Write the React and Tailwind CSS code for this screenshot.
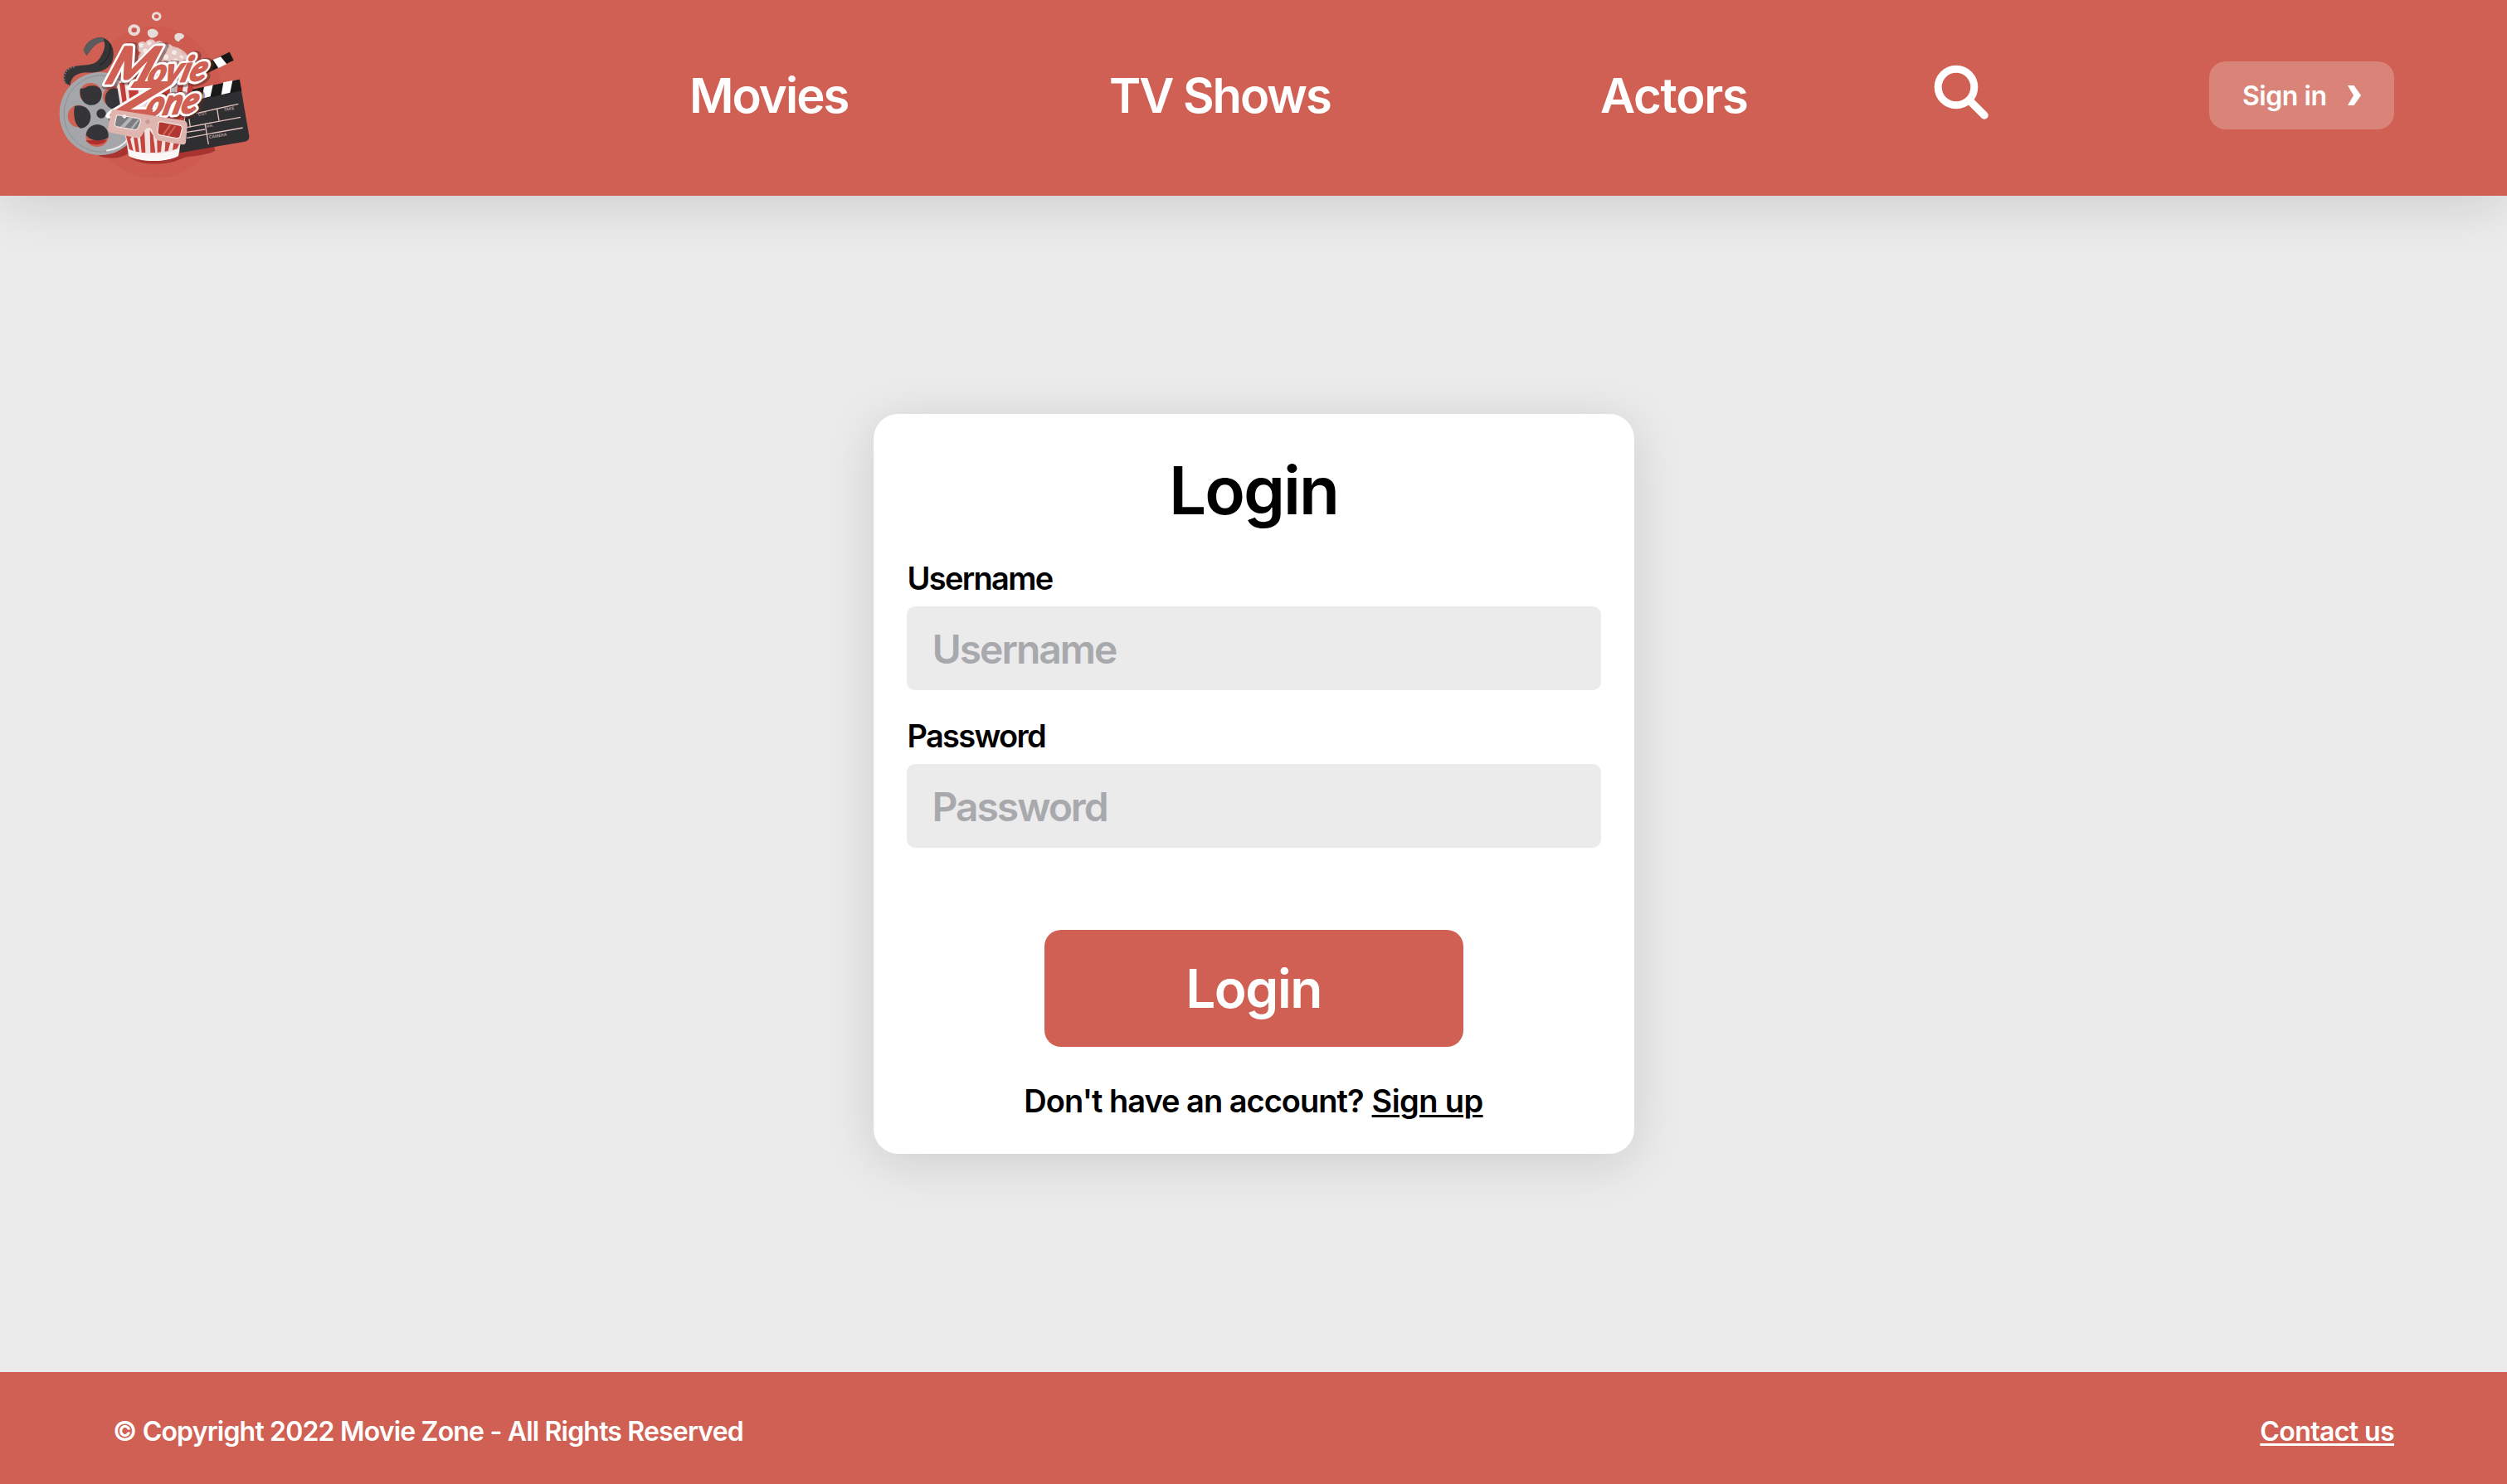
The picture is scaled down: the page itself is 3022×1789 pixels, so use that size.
const STRIPES = [
  "M305 488 L318 490 L332 546 L318 540 Z",
  "M333 496 L347 499 L354 550 L341 548 Z",
  "M356 490 L372 470 L376 552 L362 552 Z",
  "M392 470 L404 490 L412 552 L394 552 Z",
  "M418 505 L436 510 L432 550 L419 552 Z",
  "M448 512 L466 515 L458 546 L446 548 Z",
  "M478 517 L499 520 L490 538 L474 543 Z",
];

const POPS = [
  [365, 170, 20], [395, 162, 20], [425, 168, 20], [455, 180, 22], [485, 196, 22],
  [510, 214, 20], [380, 190, 22], [420, 195, 24], [455, 212, 24], [490, 225, 22],
];

function Lettering() {
  return (
    <>
      <text fontSize="166" textLength="150" lengthAdjust="spacingAndGlyphs" transform="translate(256 416) skewX(-26)">Z</text>
      <text fontSize="126" textLength="188" lengthAdjust="spacingAndGlyphs" transform="translate(372 422) rotate(-5) skewX(-20)">one</text>
      <text fontSize="186" textLength="162" lengthAdjust="spacingAndGlyphs" transform="translate(224 303) skewX(-22)">M</text>
      <text fontSize="126" textLength="212" lengthAdjust="spacingAndGlyphs" transform="translate(378 305) rotate(-4) skewX(-20)">ovie</text>
    </>
  );
}

function Logo() {
  return (
    <svg
      viewBox="0 0 810 660"
      className="h-[220px] w-[270px] shrink-0"
      role="img"
      aria-label="Movie Zone"
    >
      <ellipse cx="410" cy="370" rx="250" ry="275" fill="#c9574c" opacity="0.45" />

      {/* ground shadows */}
      <path d="M205 562 C240 580 300 572 322 548 L312 510 Z" fill="#a93330" />
      <path d="M320 572 C370 600 460 600 515 570 C545 565 600 562 628 545 L625 530 L490 550 Z" fill="#a93330" />

      {/* film strip */}
      <path
        d="M152 183 C160 150 195 130 225 137 C258 150 268 190 255 225 C235 262 190 264 160 262 C128 265 108 275 103 310 L86 300 C72 272 86 246 118 240 C160 232 190 240 210 212 C222 195 235 165 226 150 C200 150 180 175 164 202 Z"
        fill="#353537"
      />
      <path
        d="M152 183 C160 150 195 130 225 137 L226 150 C200 150 180 175 164 202 Z"
        fill="#5c5b5d"
      />
      <path d="M86 298 C76 272 90 248 120 242" fill="none" stroke="#77777a" strokeWidth="5" strokeDasharray="5 5" />
      <path d="M210 236 C240 220 252 190 248 160" fill="none" stroke="#1f1f20" strokeWidth="3" />

      {/* reel */}
      <ellipse cx="213" cy="411" rx="148" ry="150" fill="#a5a6a9" />
      <ellipse cx="216" cy="411" rx="134" ry="138" fill="none" stroke="#7c7d80" strokeWidth="3" strokeDasharray="4 3" />
      <path d="M235 545 C275 540 300 522 315 500" fill="none" stroke="#e9e9ea" strokeWidth="7" />
      <g fill="#cf6053">
        <ellipse cx="178" cy="338" rx="40" ry="38" />
        <ellipse cx="258" cy="350" rx="36" ry="38" />
        <ellipse cx="134" cy="420" rx="39" ry="40" />
        <ellipse cx="201" cy="492" rx="41" ry="39" />
      </g>
      <path d="M160 508 C175 528 220 528 236 506 Z" fill="#b02f2d" />
      <g fill="#353537">
        <path d="M140 320 C170 322 150 310 190 310 C212 312 222 330 217 350 C210 385 165 390 148 362 C140 350 138 335 140 320 Z" />
        <ellipse cx="263" cy="357" rx="33" ry="38" />
        <path d="M120 384 C150 376 176 394 178 420 C178 448 160 464 140 464 C118 450 114 410 120 384 Z" />
        <path d="M161 488 C164 462 185 450 203 450 C228 452 244 470 242 496 C225 512 180 514 161 488 Z" />
        <ellipse cx="216" cy="411" rx="17" ry="17" />
      </g>
      <circle cx="251" cy="430" r="9" fill="#606062" />

      {/* clapper */}
      <path d="M570 240 L680 188 L695 218 L600 264 Z" fill="#161617" />
      <path d="M620 216 L648 205 L670 232 L640 246 Z" fill="#ffffff" />
      <path d="M500 345 L716 287 L751 492 C752 504 745 510 735 512 L500 553 Z" fill="#2f2f31" />
      <path d="M540 325 L716 287 L724 328 L545 366 Z" fill="#19191a" />
      <path d="M588 314 L620 307 L611 349 L580 357 Z" fill="#ffffff" />
      <path d="M658 298 L691 291 L682 335 L650 343 Z" fill="#ffffff" />
      <g stroke="#e3c3bf" strokeWidth="4" fill="none">
        <path d="M560 410 L712 376" />
        <path d="M635 394 L642 437" />
        <path d="M525 461 L720 424" />
        <path d="M525 478 L592 468" />
        <path d="M525 499 L728 462" />
        <path d="M592 450 L604 522" />
        <path d="M534 430 L538 460" />
      </g>
      <g fill="#cdb3b0" className="font-['Inter'] font-medium">
        <text fontSize="15" transform="translate(568 419) rotate(-9)">CUT</text>
        <text fontSize="15" transform="translate(660 402) rotate(-9)">TAKE</text>
        <text fontSize="11" transform="translate(598 461) rotate(-9)">MIN.</text>
        <text fontSize="15" transform="translate(607 501) rotate(-9)">CAMERA</text>
      </g>

      {/* popcorn */}
      <g fill="none" stroke="#e8dbd8">
        <ellipse cx="416" cy="59" rx="13" ry="12" strokeWidth="9" />
        <ellipse cx="335" cy="109" rx="16" ry="15" strokeWidth="12" />
      </g>
      <path d="M384 112 C395 100 415 103 422 118 C424 132 405 140 393 136 C384 130 382 120 384 112 Z" fill="#e5dbd9" />
      <path d="M481 130 C485 118 505 115 516 128 C518 140 500 140 498 150 C488 152 480 142 481 130 Z" fill="#e5dbd9" />
      <ellipse cx="440" cy="215" rx="92" ry="52" fill="#dcb8b3" />
      {POPS.map(([x, y, r]) => (
        <g key={x + "-" + y}>
          <circle cx={x} cy={y} r={r} fill="#e5c6c1" />
          <circle cx={x - 5} cy={y - 6} r={r / 2.6} fill="#f4eae8" />
        </g>
      ))}

      {/* bucket */}
      <path d="M270 290 L545 290 L495 562 C450 588 360 588 315 562 Z" fill="#efe4e2" />
      <g fill="#c03c36">
        <path d="M282 300 L300 300 L325 500 L312 500 Z" />
        <path d="M312 300 L350 300 L350 420 L325 420 Z" />
        <path d="M430 300 L466 300 L460 400 L430 400 Z" />
        <path d="M492 300 L514 300 L500 400 L484 400 Z" />
        <path d="M532 300 L552 300 L530 400 L516 400 Z" />
        <path d="M380 390 L520 390 L515 440 L330 420 Z" />
      </g>
      <path d="M470 300 L490 300 L482 400 L464 400 Z" fill="#b9b4b4" />
      {STRIPES.map((d) => (
        <path key={d} d={d} fill="#c4463e" />
      ))}
      <path d="M314 540 C360 562 450 562 498 538 L495 564 C450 588 360 588 316 564 Z" fill="#fbf7f6" />

      {/* lettering */}
      <g
        className="font-['Lato'] font-black italic"
        strokeLinejoin="round"
        strokeLinecap="round"
      >
        <g fill="#5a2b2a" stroke="#5a2b2a" strokeWidth="34" opacity="0.5" aria-hidden="true">
          <text fontSize="186" textLength="162" lengthAdjust="spacingAndGlyphs" transform="translate(230 305) skewX(-22)">M</text>
          <text fontSize="126" textLength="212" lengthAdjust="spacingAndGlyphs" transform="translate(383 307) rotate(-4) skewX(-20)">ovie</text>
          <text fontSize="126" textLength="188" lengthAdjust="spacingAndGlyphs" transform="translate(376 424) rotate(-5) skewX(-20)">one</text>
        </g>
        <g fill="#ffffff" stroke="#ffffff" strokeWidth="22" aria-hidden="true">
          <Lettering />
        </g>
        <g fill="#cf6053" stroke="#cf6053" strokeWidth="5">
          <Lettering />
        </g>
      </g>

      {/* 3D glasses */}
      <path
        d="M262 396 L515 436 C527 440 529 450 527 460 L522 515 C520 524 512 524 505 522 L420 508 C402 500 408 468 390 462 C370 458 368 498 350 500 L252 480 C242 478 238 470 241 460 L252 405 C254 398 258 396 262 396 Z"
        fill="#dfb5af"
      />
      <path d="M276 416 L348 428 C358 430 360 436 357 444 L350 462 C347 469 342 470 334 469 L276 459 C266 457 263 452 266 444 L270 424 C271 418 272 416 276 416 Z" fill="#7d7e81" stroke="#efdedb" strokeWidth="4" />
      <path d="M430 440 L500 453 C508 455 510 460 508 468 L502 492 C500 500 494 501 488 500 L430 489 C422 487 419 482 420 475 L423 448 C424 442 426 440 430 440 Z" fill="#b23632" stroke="#efdedb" strokeWidth="4" />
      <path d="M285 458 L318 424 L332 426 L300 461 Z M322 464 L348 432 L354 434 L330 466 Z" fill="#b3b4b6" />
      <path d="M440 488 L466 452 M458 491 L484 456" stroke="#d4665a" strokeWidth="6" />
      <circle cx="384" cy="440" r="8" fill="#c99a94" />
      <circle cx="300" cy="421" r="7" fill="#f6eceb" />
    </svg>
  );
}

function Field({ label, type, className }) {
  return (
    <label className={"flex flex-col gap-[14px] " + className}>
      <span className="pl-px text-[38px] leading-[40px] tracking-[-1.7px]">{label}</span>
      <input
        type={type}
        placeholder={label}
        className="h-[101px] w-full rounded-[10px] bg-[#ebebeb] px-[31px] pt-[2px] text-[48px] font-semibold tracking-[-2.05px] outline-none placeholder:text-[#a8a9ad] placeholder:opacity-100"
      />
    </label>
  );
}

export default function App() {
  return (
    <div className="flex h-[1789px] w-full flex-col bg-[#ebebeb] font-['Inter',sans-serif] font-semibold text-black">
      <header className="relative z-10 flex h-[236px] shrink-0 items-start bg-[#cf6053] pl-[50px] text-white shadow-[0_10px_60px_rgba(0,0,0,0.13)]">
        <Logo />
        <nav className="mt-[85px] flex text-[58px] leading-[60px] whitespace-nowrap">
          <a className="ml-[511px] w-[191px] tracking-[-1.95px]">Movies</a>
          <a className="ml-[315px] w-[267px] tracking-[-2.07px]">TV Shows</a>
          <a className="ml-[325px] w-[178px] tracking-[-1.27px]">Actors</a>
        </nav>
        <svg
          viewBox="0 0 66 66"
          className="mt-[78px] ml-[224px] size-[66px] shrink-0"
          fill="none"
          stroke="#ffffff"
          strokeLinecap="round"
        >
          <circle cx="27" cy="27" r="21.8" strokeWidth="9" />
          <path d="M43 43 L61 61" strokeWidth="9.5" />
        </svg>
        <button className="mt-[74px] ml-[266px] flex h-[82px] w-[223px] items-center rounded-[20px] bg-[#da8479] pl-10 text-[32px] leading-none tracking-[-0.45px]">
          <span className="w-[127px] pt-px text-left">Sign in</span>
          <svg viewBox="0 0 16 24" className="h-6 w-4" fill="#ffffff">
            <path d="M0 0 H7.5 L16 12 L7.5 24 H0 L7 12 Z" />
          </svg>
        </button>
      </header>

      <main className="flex h-[1418px] shrink-0 items-center justify-center">
        <form className="flex h-[892px] w-[917px] flex-col rounded-[30px] bg-white px-10 pt-[52px] shadow-[0_10px_60px_rgba(0,0,0,0.13)]">
          <h1 className="text-center text-[80px] leading-none tracking-[-1.98px]">Login</h1>
          <Field label="Username" type="text" className="mt-[46px]" />
          <Field label="Password" type="password" className="mt-[35px]" />
          <button
            type="button"
            className="mt-[99px] h-[141px] w-[505px] self-center rounded-[20px] bg-[#cf6053] text-[64px] leading-none tracking-[-1.48px] text-white"
          >
            Login
          </button>
          <p className="mt-[45px] flex justify-center gap-[10px] text-[38px] leading-[40px] tracking-[-1px]">
            <span>Don't have an account?</span>
            <a className="tracking-[-0.6px] underline decoration-[2.5px] underline-offset-[3px]">Sign up</a>
          </p>
        </form>
      </main>

      <footer className="flex h-[135px] shrink-0 items-center justify-between bg-[#cf6053] px-[136px] pt-[8px] text-[32px] leading-none text-white">
        <span className="tracking-[-0.82px]">© Copyright 2022 Movie Zone - All Rights Reserved</span>
        <a className="tracking-[-0.6px] underline decoration-[2.5px] underline-offset-[3px]">Contact us</a>
      </footer>
    </div>
  );
}
